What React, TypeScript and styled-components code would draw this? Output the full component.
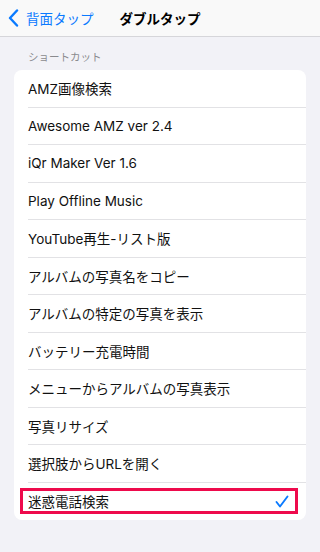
import styled, { createGlobalStyle } from "styled-components";

const GlobalStyle = createGlobalStyle`
  html, body {
    margin: 0;
    padding: 0;
    background: #f2f2f7;
  }
  body {
    font-family: "Inter", "Noto Sans CJK JP", sans-serif;
    -webkit-font-smoothing: antialiased;
  }
`;

const shortcuts = [
  "AMZ画像検索",
  "Awesome AMZ ver 2.4",
  "iQr Maker Ver 1.6",
  "Play Offline Music",
  "YouTube再生-リスト版",
  "アルバムの写真名をコピー",
  "アルバムの特定の写真を表示",
  "バッテリー充電時間",
  "メニューからアルバムの写真表示",
  "写真リサイズ",
  "選択肢からURLを開く",
  "迷惑電話検索",
];

const selected = "迷惑電話検索";

const App = () => {
  return (
    <Page>
      <GlobalStyle />
      <NavBar>
        <BackButton>
          <svg width="11" height="18" viewBox="0 0 11 18">
            <path
              d="M9 1.5 L2 9 L9 16.5"
              fill="none"
              stroke="#0a7aff"
              strokeWidth="2.4"
              strokeLinecap="round"
              strokeLinejoin="round"
            />
          </svg>
          <BackLabel>背面タップ</BackLabel>
        </BackButton>
        <Title>ダブルタップ</Title>
      </NavBar>

      <Content>
        <SectionHeader>ショートカット</SectionHeader>
        <Card>
          {shortcuts.map((name, i) => (
            <Row key={name}>
              <RowInner $last={i === shortcuts.length - 1}>
                <Label>{name}</Label>
                {name === selected && (
                  <svg width="14" height="13" viewBox="0 0 14 13">
                    <path
                      d="M1.5 7 L5 11.5 L12.5 1.5"
                      fill="none"
                      stroke="#0a7aff"
                      strokeWidth="1.9"
                      strokeLinecap="round"
                      strokeLinejoin="round"
                    />
                  </svg>
                )}
              </RowInner>
              {name === selected && <Highlight />}
            </Row>
          ))}
        </Card>
      </Content>
    </Page>
  );
};

export default App;

const Page = styled.div`
  width: 320px;
  height: 552px;
  background: #f2f2f7;
  overflow: hidden;
`;

const NavBar = styled.div`
  position: relative;
  height: 36px;
  display: flex;
  align-items: center;
  justify-content: center;
  background: #f9f9f9;
  border-bottom: 1px solid #d6d6da;
`;

const BackButton = styled.div`
  position: absolute;
  left: 8px;
  top: 0;
  bottom: 0;
  display: flex;
  align-items: center;
  gap: 7px;
`;

const BackLabel = styled.span`
  font-size: 13.5px;
  color: #0a7aff;
`;

const Title = styled.span`
  font-size: 13.5px;
  font-weight: 700;
  color: #000;
`;

const Content = styled.div`
  padding: 14px 14px 0;
`;

const SectionHeader = styled.div`
  padding-left: 14px;
  font-size: 10.5px;
  line-height: 14px;
  color: #8a8a8e;
  margin-bottom: 5px;
`;

const Card = styled.div`
  background: #fff;
  border-radius: 8px;
  overflow: hidden;
`;

const Row = styled.div`
  position: relative;
  padding-left: 14px;
`;

const RowInner = styled.div<{ $last: boolean }>`
  height: 37.5px;
  box-sizing: border-box;
  display: flex;
  align-items: center;
  justify-content: space-between;
  padding-right: 17px;
  border-bottom: ${(p) => (p.$last ? "none" : "1px solid #e2e2e5")};
`;

const Label = styled.span`
  font-size: 13.5px;
  color: #111;
`;

const Highlight = styled.div`
  position: absolute;
  left: 6px;
  right: 8px;
  top: 5px;
  bottom: 6px;
  border: 3px solid #ee0a4c;
  pointer-events: none;
`;
